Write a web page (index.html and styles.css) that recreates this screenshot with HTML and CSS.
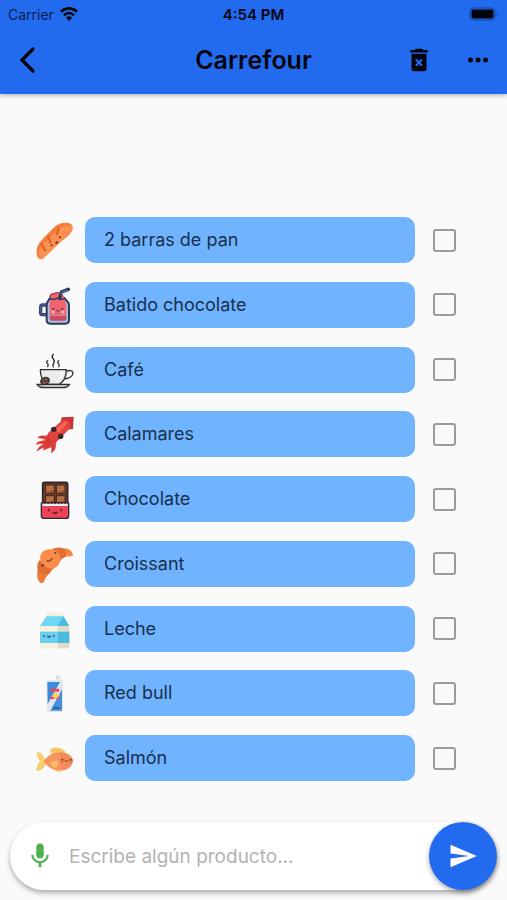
FILE: index.html
```html
<!DOCTYPE html>
<html lang="es">
<head>
  <meta charset="UTF-8" />
  <meta name="viewport" content="width=device-width, initial-scale=1.0" />
  <title>Carrefour</title>
  <link rel="stylesheet" href="styles.css">
</head>
<body>
  <header class="header">
    <div class="status-bar">
      <div class="carrier">
        <span>Carrier</span>
        <svg width="18" height="14" viewBox="0 0 54 42" fill="none" stroke="currentColor" stroke-width="8">
          <path d="M3 14 C17 1 37 1 51 14" />
          <path d="M12 25 C21 16 33 16 42 25" />
          <path d="M18 32 Q27 24 36 32 L27 42 Z" fill="currentColor" stroke="none" />
        </svg>
      </div>
      <span class="clock">4:54 PM</span>
      <svg class="battery" width="30" height="14" viewBox="0 0 30 14">
        <rect x="1" y="1" width="25" height="12" rx="4" fill="none" stroke="currentColor" stroke-opacity=".4" />
        <rect x="2.500" y="2.500" width="22" height="9" rx="2" fill="currentColor" />
        <path d="M28 5 q2 2 0 4z" fill="currentColor" opacity=".5" />
      </svg>
    </div>
    <div class="app-bar">
      <button class="icon-btn back" aria-label="Volver">
        <svg width="30" height="30" viewBox="0 0 30 30" fill="none" stroke="currentColor" stroke-width="3.300">
          <path d="M19 4 L8 15 L19 26" stroke-linecap="round" />
        </svg>
      </button>
      <h1 class="title">Carrefour</h1>
      <div class="actions">
        <button class="icon-btn" aria-label="Borrar lista">
          <svg width="30" height="30" viewBox="0 0 24 24" fill="currentColor">
            <path d="M6 19c0 1.100.9 2 2 2h8c1.100 0 2-.9 2-2V7H6v12zm2.900-6.900l1.200-1.200L12 12.800l1.900-1.900 1.200 1.200L13.200 14l1.900 1.900-1.200 1.200L12 15.200l-1.900 1.900-1.200-1.200L10.800 14zM15.500 4l-1-1h-5l-1 1H5v2h14V4z" />
          </svg>
        </button>
        <button class="icon-btn" aria-label="Más opciones">
          <svg width="30" height="30" viewBox="0 0 24 24" fill="currentColor">
            <circle cx="6" cy="12" r="2" />
            <circle cx="12" cy="12" r="2" />
            <circle cx="18" cy="12" r="2" />
          </svg>
        </button>
      </div>
    </div>
  </header>

  <main class="content">
    <ul class="list">
      <li class="item">
        <svg class="pic" viewBox="30 31 120 120">
          <path d="M35 126 C34 111 44 97 56 85 L86 54 C98 42 114 37 131 40 C142 43 146 53 140 65 C134 77 122 85 109 95 L59 142 C50 152 43 150 38 143 C35 139 35 133 35 126Z" fill="#f57e3c" />
          <path d="M41 136 C42 118 52 105 64 94 L97 63 C108 52 122 46 141 49 C144 55 143 60 140 65 C134 77 122 85 109 95 L59 142 C50 152 43 148 41 136Z" fill="#fd9050" />
          <path d="M50 103 L60 122 M70 81 L76 98 M101 56 L96 73" fill="none" stroke="#d9652c" stroke-width="7" stroke-linecap="round" />
          <circle cx="80" cy="107" r="3" fill="#5d3826" />
          <circle cx="105" cy="83" r="3" fill="#5d3826" />
          <path d="M89 99 l9 -6 q3 8 -4 10z" fill="#6a3a25" />
        </svg>
        <label class="name" for="item0">2 barras de pan</label>
        <input class="check" type="checkbox" id="item0" />
      </li>
      <li class="item">
        <svg class="pic" viewBox="30 30 120 120">
          <path d="M66 90 H53 Q47 90 47 96 V113 Q47 119 53 119 H66" fill="none" stroke="#2f416d" stroke-width="10" />
          <path d="M66 90 H53 Q47 90 47 96 V113 Q47 119 53 119 H66" fill="none" stroke="#5f7cab" stroke-width="2" />
          <path d="M75 69 L68 80 Q65 84 65 91 V135 Q65 146 76 146 H121 Q132 146 132 135 V91 Q132 84 126 78 L117 68Z" fill="#a9bfda" stroke="#29395f" stroke-width="6" />
          <path d="M76 69 Q74 54 87 56 Q95 49 105 56 Q118 56 117 70 L124 86 V121 H74 V86Z" fill="#f0646f" />
          <path d="M74 122 H124 V131 Q124 137 117 137 H81 Q74 137 74 131Z" fill="#c84b62" />
          <path d="M73 69 Q84 78 96 69 Q106 78 120 69" fill="none" stroke="#29395f" stroke-width="4" />
          <path d="M75 67 Q75 55 88 56 Q97 49 106 57" fill="none" stroke="#9e3950" stroke-width="4" />
          <path d="M105 67 L109 51 L130 43" fill="none" stroke="#263657" stroke-width="10" stroke-linecap="round" />
          <path d="M107 60 L111 51 L128 45" fill="none" stroke="#536e9c" stroke-width="4" />
          <circle cx="84" cy="111" r="5" fill="#ffb2ad" /><circle cx="113" cy="111" r="5" fill="#ffb2ad" />
          <path d="M94 106 q5 5 10 0" fill="none" stroke="#4a2b4f" stroke-width="3" />
          <circle cx="85" cy="102" r="3" fill="#4a2b4f" /><circle cx="112" cy="102" r="3" fill="#4a2b4f" />
        </svg>
        <label class="name" for="item1">Batido chocolate</label>
        <input class="check" type="checkbox" id="item1" />
      </li>
      <li class="item">
        <svg class="pic" viewBox="30 30 120 120" stroke="#303033" stroke-width="4" stroke-linecap="round" stroke-linejoin="round">
          <path d="M68 62 q-6 5 0 9 q4 5 0 9 M85 43 q-7 7 0 14 q6 7 0 14 q-3 5 0 10 M101 62 q-6 5 0 9 q4 5 0 9" fill="none" />
          <path d="M123 94 Q142 87 144 99 Q143 113 119 117" fill="none" />
          <path d="M46 89 H124 Q124 120 103 133 H65 Q46 118 46 89Z" fill="#ececed" />
          <path d="M36 133 H134 Q127 143 113 143 H56 Q43 143 36 133Z" fill="#bfbfc2" />
          <path d="M112 96 Q107 114 98 124" stroke="#fff" fill="none" />
          <ellipse cx="60" cy="123" rx="13" ry="10" fill="#845348" transform="rotate(-20 60 123)" />
          <path d="M49 126 q8 -8 13 -3 q5 3 9 -4" fill="none" stroke="#352422" stroke-width="3" />
        </svg>
        <label class="name" for="item2">Café</label>
        <input class="check" type="checkbox" id="item2" />
      </li>
      <li class="item">
        <svg class="pic" viewBox="30 28 120 120">
          <path d="M110 38 L146 36 L144 73 L124 75 L106 56Z" fill="#c9343a" />
          <path d="M70 84 L108 50 Q116 44 126 47 L137 58 Q138 68 130 76 L101 106 L80 118 L62 100Z" fill="#e2433e" />
          <path d="M92 72 L122 49 L130 53 L101 85Z" fill="#f06553" />
          <path d="M76 87 Q66 97 57 94 Q46 92 38 99 Q50 99 60 104 L68 108Z M70 97 Q60 111 48 110 Q38 110 34 119 Q48 114 60 119 L78 108Z M72 103 Q66 117 54 120 Q42 124 36 139 Q48 129 61 128 L80 114Z M78 108 Q72 121 62 125 Q56 129 56 136 Q66 131 76 128 L88 112Z M96 104 Q90 118 91 128 Q90 139 79 144 Q82 134 79 126 L84 110Z" fill="#db3a38" stroke="#db3a38" stroke-width="2" stroke-linejoin="round" />
          <circle cx="86" cy="74" r="8" fill="#342126" /><circle cx="107" cy="95" r="8" fill="#342126" />
          <circle cx="85" cy="72" r="2" fill="#625459" /><circle cx="106" cy="93" r="2" fill="#625459" />
        </svg>
        <label class="name" for="item3">Calamares</label>
        <input class="check" type="checkbox" id="item3" />
      </li>
      <li class="item">
        <svg class="pic" viewBox="30 27 120 120">
          <rect x="53" y="37" width="75" height="75" rx="6" fill="#6c3d2c" stroke="#2d242a" stroke-width="5" />
          <g fill="#b56f40" stroke="#42251f" stroke-width="3">
            <rect x="62" y="45" width="26" height="25" /><rect x="94" y="45" width="26" height="25" />
            <rect x="62" y="77" width="26" height="25" /><rect x="94" y="77" width="26" height="25" />
          </g>
          <path d="M64 68 H86 V60Z M96 68 H118 V60Z M64 99 H86 V92Z M96 99 H118 V92Z" fill="#8b4e34" />
          <path d="M49 100 q5 -5 10 0 q5 -5 10 0 q5 -5 10 0 q6 -5 12 0 q5 -5 10 0 q5 -5 10 0 q5 -5 10 0 q5 -5 10 0 V137 Q131 145 124 145 H58 Q49 145 49 137Z" fill="#ed4258" stroke="#2f2837" stroke-width="4" />
          <path d="M52 103 q4 -5 8 0 q5 -5 10 0 q5 -5 10 0 q5 -5 10 0 q5 -5 10 0 q5 -5 10 0 q5 -5 10 0 q4 -5 8 0 V108 H52Z" fill="#eef1f5" />
          <path d="M84 126 q6 8 12 0" fill="none" stroke="#38232e" stroke-width="4" />
          <circle cx="71" cy="121" r="3" fill="#38232e" /><circle cx="108" cy="121" r="3" fill="#38232e" />
        </svg>
        <label class="name" for="item4">Chocolate</label>
        <input class="check" type="checkbox" id="item4" />
      </li>
      <li class="item">
        <svg class="pic" viewBox="30 27 120 120">
          <path d="M112 40 Q136 36 145 60 Q138 66 126 64 L108 68Z" fill="#f58743" />
          <path d="M38 108 Q33 132 44 142 Q52 149 58 138 Q62 124 74 114Z" fill="#ee7c38" />
          <path d="M80 43 Q98 34 114 40 Q128 50 123 65 Q112 68 102 80Z" fill="#e06f33" />
          <path d="M43 76 Q33 92 39 110 Q54 122 72 117 Q78 106 90 96Z" fill="#e06f33" />
          <path d="M46 76 Q42 55 60 46 Q82 38 98 52 Q114 70 102 87 Q92 102 78 101 Q55 98 46 76Z" fill="#fb8c4a" />
          <path d="M66 77 q8 5 16 -7" fill="none" stroke="#713d2b" stroke-width="4" />
          <circle cx="53" cy="91" r="4" fill="#713d2b" /><circle cx="91" cy="54" r="3" fill="#713d2b" />
        </svg>
        <label class="name" for="item5">Croissant</label>
        <input class="check" type="checkbox" id="item5" />
      </li>
      <li class="item">
        <svg class="pic" viewBox="30 26 120 120">
          <path d="M64 37 H116 V50 H64Z" fill="#f3f0df" />
          <path d="M64 48 H115 L133 77 H45Z" fill="#71d5f4" />
          <path d="M115 48 L98 77 H133Z" fill="#4dbbe1" />
          <path d="M45 77 H98 V144 H45Z" fill="#f5f1df" />
          <path d="M98 77 H133 V144 H98Z" fill="#dfdcca" />
          <path d="M45 94 H98 V128 H45Z" fill="#68d1f2" />
          <path d="M98 94 H133 V128 H98Z" fill="#4cb9df" />
          <circle cx="57" cy="107" r="3" fill="#315a75" /><circle cx="86" cy="107" r="3" fill="#315a75" />
          <path d="M67 107 q5 6 10 0" fill="none" stroke="#315a75" stroke-width="4" />
        </svg>
        <label class="name" for="item6">Leche</label>
        <input class="check" type="checkbox" id="item6" />
      </li>
      <li class="item">
        <svg class="pic" viewBox="30 26 120 120">
          <path d="M95 47 V36 H103 V51" fill="none" stroke="#d7dce1" stroke-width="5" />
          <path d="M65 50 L73 46 H110 L114 51 V138 L109 143 H70 L65 137Z" fill="#e1e7ed" />
          <path d="M67 53 H105 L68 119Z" fill="#3c8bdc" />
          <path d="M111 75 V139 H76Z" fill="#438fdc" />
          <path d="M76 73 H103 V82 H76Z M75 97 H88 V104 H75Z M96 97 H104 V104 H93Z" fill="#e34c5e" />
          <path d="M81 93 L92 84 L104 94 L92 105Z" fill="#fbd15b" />
          <path d="M85 131 H104" stroke="#245c9b" stroke-width="5" />
        </svg>
        <label class="name" for="item7">Red bull</label>
        <input class="check" type="checkbox" id="item7" />
      </li>
      <li class="item">
        <svg class="pic" viewBox="30 219 120 120">
          <path d="M75 262 Q74 247 91 248 Q112 247 124 262 L90 271Z" fill="#f9c565" />
          <path d="M61 283 Q50 258 36 262 Q32 272 46 288 Q32 301 34 316 Q46 325 63 298Z" fill="#f9ce71" />
          <path d="M55 289 Q75 261 106 262 Q136 264 144 285 Q142 307 119 315 Q83 325 55 289Z" fill="#f39660" />
          <path d="M107 262 Q139 266 144 285 Q142 307 118 315 Q99 291 107 262Z" fill="#f58b57" />
          <path d="M76 293 Q91 284 101 290 Q101 305 88 308 Q77 304 76 293Z" fill="#f9bd61" />
          <path d="M92 318 L105 317 L110 320" stroke="#f9c565" stroke-width="4" fill="none" />
          <circle cx="112" cy="284" r="3" fill="#60382f" /><circle cx="137" cy="284" r="3" fill="#60382f" />
          <path d="M119 286 q6 7 11 0" fill="none" stroke="#60382f" stroke-width="3" />
          <circle cx="110" cy="292" r="4" fill="#f36d60" /><circle cx="137" cy="292" r="3" fill="#f36d60" />
        </svg>
        <label class="name" for="item8">Salmón</label>
        <input class="check" type="checkbox" id="item8" />
      </li>
    </ul>
  </main>

  <form class="composer">
    <button class="mic" type="button" aria-label="Dictar">
      <svg width="30" height="30" viewBox="0 0 24 24" fill="currentColor">
        <path d="M12 14c1.660 0 2.990-1.340 2.990-3L15 5c0-1.660-1.340-3-3-3S9 3.340 9 5v6c0 1.660 1.340 3 3 3zm5.300-3c0 3-2.540 5.100-5.300 5.100S6.700 14 6.700 11H5c0 3.410 2.720 6.230 6 6.720V21h2v-3.280c3.280-.48 6-3.300 6-6.720h-1.700z" />
      </svg>
    </button>
    <input class="field" type="text" placeholder="Escribe algún producto..." aria-label="Producto" />
    <button class="send" type="submit" aria-label="Enviar">
      <svg width="30" height="30" viewBox="0 0 24 24" fill="currentColor">
        <path d="M2 21L23 12 2 3v7l15 2-15 2z" />
      </svg>
    </button>
  </form>
</body>
</html>
```

FILE: styles.css
```css
* {
  box-sizing: border-box;
}

body {
  margin: 0;
  min-height: 100vh;
  display: flex;
  flex-direction: column;
  background: #fafafa;
  color: #000;
  font-family: Inter, "Liberation Sans", sans-serif;
}

button {
  padding: 0;
  border: none;
  background: none;
  color: inherit;
  font: inherit;
  cursor: pointer;
}

svg {
  display: block;
}

.header {
  padding-bottom: 2px;
  background: #226bee;
  color: #02050d;
  box-shadow: 0 1px 5px rgba(0, 0, 0, 0.35);
}

.status-bar,
.app-bar {
  display: grid;
  grid-template-columns: 1fr auto 1fr;
  align-items: center;
}

.status-bar {
  height: 28px;
  padding: 0 8px;
  font-size: 14px;
}

.carrier {
  display: flex;
  align-items: center;
  gap: 6px;
  color: #0a2150;
}

.carrier svg {
  color: #02050d;
}

.clock {
  font-size: 15px;
  font-weight: 600;
}

.battery {
  justify-self: end;
}

.app-bar {
  height: 64px;
  padding: 0 14px;
}

.icon-btn {
  width: 30px;
  height: 30px;
}

.title {
  margin: 0;
  font-size: 25px;
  font-weight: 600;
}

.actions {
  display: flex;
  justify-content: flex-end;
  gap: 29px;
}

.content {
  flex: 1;
  display: flex;
  padding: 123px 51px 41px 35px;
}

.list {
  flex: 1;
  display: flex;
  flex-direction: column;
  justify-content: space-between;
  gap: 16px;
  margin: 0;
  padding: 0;
  list-style: none;
}

.item {
  display: flex;
  align-items: center;
}

.pic {
  width: 40px;
  height: 40px;
  margin-right: 10px;
}

.name {
  flex: 1;
  padding: 0 19px;
  border-radius: 10px;
  background: #70b3ff;
  color: #19304d;
  font-size: 18px;
  line-height: 46px;
}

.check {
  appearance: none;
  width: 23px;
  height: 23px;
  margin: 0 0 0 18px;
  border: 2px solid #9b9b9b;
  border-radius: 3px;
}

.check:checked {
  background: #226bee;
  border-color: #226bee;
}

.composer {
  display: flex;
  align-items: center;
  height: 68px;
  margin: 0 10px 10px;
  border-radius: 34px;
  background: #fff;
  box-shadow: 0 3px 5px rgba(0, 0, 0, 0.3);
}

.mic {
  margin: 0 14px 0 15px;
  color: #4caf50;
}

.field {
  flex: 1;
  min-width: 0;
  padding: 0;
  border: none;
  outline: none;
  background: none;
  font: inherit;
  font-size: 19px;
}

.field::placeholder {
  color: #b3b3b3;
}

.send {
  display: flex;
  align-items: center;
  justify-content: center;
  width: 68px;
  height: 68px;
  border-radius: 50%;
  background: #226bee;
  color: #fff;
  box-shadow: 0 2px 5px rgba(0, 0, 0, 0.35);
}
```
